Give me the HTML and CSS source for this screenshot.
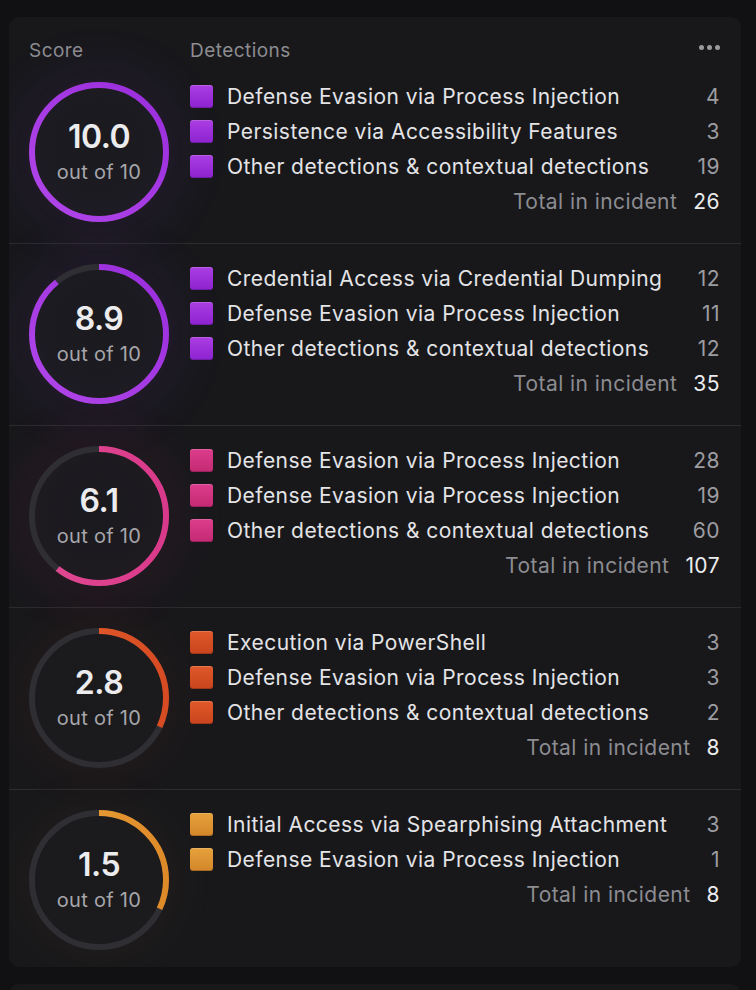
FILE: index.html
```html
<!DOCTYPE html>
<html lang="en">
<head>
<meta charset="utf-8">
<title>Incident scores</title>
<link rel="stylesheet" href="styles.css">
</head>
<body>
<svg class="defs" width="0" height="0" aria-hidden="true">
  <defs>
    <linearGradient id="g-purple" x1="0" y1="0" x2="1" y2="1">
      <stop offset="0" stop-color="#b146ea"/>
      <stop offset="1" stop-color="#9a2ddc"/>
    </linearGradient>
    <linearGradient id="g-pink" x1="0" y1="0" x2="0" y2="1">
      <stop offset="0" stop-color="#e24a92"/>
      <stop offset="1" stop-color="#d9398a"/>
    </linearGradient>
    <linearGradient id="g-red" x1="0" y1="0" x2="0" y2="1">
      <stop offset="0" stop-color="#e5602f"/>
      <stop offset="1" stop-color="#d74b22"/>
    </linearGradient>
    <linearGradient id="g-orange" x1="0" y1="0" x2="0" y2="1">
      <stop offset="0" stop-color="#eca63c"/>
      <stop offset="1" stop-color="#de8a28"/>
    </linearGradient>
  </defs>
</svg>
<div class="card">
  <div class="head">
    <span class="h-score">Score</span>
    <span class="h-det">Detections</span>
    <span class="dots"><i></i><i></i><i></i></span>
  </div>

  <section class="row purple">
    <div class="gauge">
      <svg viewBox="0 0 140 140" class="ring">
        <circle class="track" cx="70" cy="70" r="67"/>
        <circle class="arc" cx="70" cy="70" r="67" stroke="url(#g-purple)" style="stroke-dasharray: 420.97 420.97"/>
      </svg>
      <div class="score"><b>10.0</b><span>out of 10</span></div>
    </div>
    <ul class="dets">
      <li><span class="sq"></span><span class="lbl">Defense Evasion via Process Injection</span><span class="cnt">4</span></li>
      <li><span class="sq"></span><span class="lbl">Persistence via Accessibility Features</span><span class="cnt">3</span></li>
      <li><span class="sq"></span><span class="lbl">Other detections &amp; contextual detections</span><span class="cnt">19</span></li>
      <li class="total"><span class="tl">Total in incident</span><span class="tn">26</span></li>
    </ul>
  </section>

  <section class="row purple">
    <div class="gauge">
      <svg viewBox="0 0 140 140" class="ring">
        <circle class="track" cx="70" cy="70" r="67"/>
        <circle class="arc" cx="70" cy="70" r="67" stroke="url(#g-purple)" style="stroke-dasharray: 374.66 420.97"/>
      </svg>
      <div class="score"><b>8.9</b><span>out of 10</span></div>
    </div>
    <ul class="dets">
      <li><span class="sq"></span><span class="lbl">Credential Access via Credential Dumping</span><span class="cnt">12</span></li>
      <li><span class="sq"></span><span class="lbl">Defense Evasion via Process Injection</span><span class="cnt">11</span></li>
      <li><span class="sq"></span><span class="lbl">Other detections &amp; contextual detections</span><span class="cnt">12</span></li>
      <li class="total"><span class="tl">Total in incident</span><span class="tn">35</span></li>
    </ul>
  </section>

  <section class="row pink">
    <div class="gauge">
      <svg viewBox="0 0 140 140" class="ring">
        <circle class="track" cx="70" cy="70" r="67"/>
        <circle class="arc" cx="70" cy="70" r="67" stroke="url(#g-pink)" style="stroke-dasharray: 254.79 420.97"/>
      </svg>
      <div class="score"><b>6.1</b><span>out of 10</span></div>
    </div>
    <ul class="dets">
      <li><span class="sq"></span><span class="lbl">Defense Evasion via Process Injection</span><span class="cnt">28</span></li>
      <li><span class="sq"></span><span class="lbl">Defense Evasion via Process Injection</span><span class="cnt">19</span></li>
      <li><span class="sq"></span><span class="lbl">Other detections &amp; contextual detections</span><span class="cnt">60</span></li>
      <li class="total"><span class="tl">Total in incident</span><span class="tn">107</span></li>
    </ul>
  </section>

  <section class="row red">
    <div class="gauge">
      <svg viewBox="0 0 140 140" class="ring">
        <circle class="track" cx="70" cy="70" r="67"/>
        <circle class="arc" cx="70" cy="70" r="67" stroke="url(#g-red)" style="stroke-dasharray: 134.7 420.97"/>
      </svg>
      <div class="score"><b>2.8</b><span>out of 10</span></div>
    </div>
    <ul class="dets">
      <li><span class="sq"></span><span class="lbl">Execution via PowerShell</span><span class="cnt">3</span></li>
      <li><span class="sq"></span><span class="lbl">Defense Evasion via Process Injection</span><span class="cnt">3</span></li>
      <li><span class="sq"></span><span class="lbl">Other detections &amp; contextual detections</span><span class="cnt">2</span></li>
      <li class="total"><span class="tl">Total in incident</span><span class="tn">8</span></li>
    </ul>
  </section>

  <section class="row orange last">
    <div class="gauge">
      <svg viewBox="0 0 140 140" class="ring">
        <circle class="track" cx="70" cy="70" r="67"/>
        <circle class="arc" cx="70" cy="70" r="67" stroke="url(#g-orange)" style="stroke-dasharray: 134.7 420.97"/>
      </svg>
      <div class="score"><b>1.5</b><span>out of 10</span></div>
    </div>
    <ul class="dets">
      <li><span class="sq"></span><span class="lbl">Initial Access via Spearphising Attachment</span><span class="cnt">3</span></li>
      <li><span class="sq"></span><span class="lbl">Defense Evasion via Process Injection</span><span class="cnt">1</span></li>
      <li class="total"><span class="tl">Total in incident</span><span class="tn">8</span></li>
    </ul>
  </section>
</div>
<div class="card next"></div>
</body>
</html>
```

FILE: styles.css
```css
html, body {
  margin: 0;
  padding: 0;
  background: #111113;
}
body {
  padding: 17px 15px 0 9px;
  font-family: Inter, "Noto Sans", "Liberation Sans", sans-serif;
  color: #e4e4e7;
  overflow: hidden;
  height: 990px;
  box-sizing: border-box;
}
.defs {
  position: absolute;
  width: 0;
  height: 0;
}
.card {
  background: #18181b;
  border-radius: 10px;
  overflow: hidden;
}
.card.next {
  margin-top: 17px;
  height: 40px;
}
.head {
  display: flex;
  align-items: center;
  height: 24px;
  padding: 21px 21px 0 20px;
  font-size: 19px;
  letter-spacing: 0.45px;
  color: #8c8c91;
}
.h-score {
  width: 161px;
}
.h-det {
  flex: 1;
}
.dots {
  display: flex;
  gap: 3px;
  margin-top: -6px;
}
.dots i {
  width: 5px;
  height: 5px;
  border-radius: 50%;
  background: #9a9a9e;
}
.row {
  display: grid;
  grid-template-columns: 140px 1fr;
  column-gap: 21px;
  padding: 20px 21px 21px 20px;
  border-top: 1px solid #2b2b30;
}
.row:first-of-type {
  border-top: none;
}
.row.last {
  padding-bottom: 17px;
}
.gauge {
  width: 140px;
  height: 140px;
  border-radius: 50%;
  display: grid;
  place-items: center;
  background: radial-gradient(circle at 50% 45%, #1a1a1e 0%, #1d1b22 55%, #201c27 100%);
}
.purple .gauge { box-shadow: 0 0 55px 10px rgba(140, 60, 210, 0.11); }
.pink .gauge { box-shadow: 0 0 55px 10px rgba(215, 50, 130, 0.09); background: radial-gradient(circle at 50% 45%, #1a1a1e 0%, #1d1a20 55%, #211b22 100%); }
.red .gauge { box-shadow: 0 0 50px 8px rgba(215, 80, 40, 0.06); background: radial-gradient(circle at 50% 45%, #1a1a1c 0%, #1c1a1d 100%); }
.orange .gauge { box-shadow: 0 0 50px 8px rgba(225, 130, 40, 0.05); background: radial-gradient(circle at 50% 45%, #1a1a1c 0%, #1c1a1d 100%); }
.ring {
  grid-area: 1 / 1;
  width: 140px;
  height: 140px;
  transform: rotate(-90deg);
}
.ring circle {
  fill: none;
  stroke-width: 6;
}
.ring .track {
  stroke: #2e2e33;
}
.score {
  grid-area: 1 / 1;
  display: flex;
  flex-direction: column;
  align-items: center;
  margin-top: 4px;
}
.score b {
  font-size: 32px;
  font-weight: 600;
  line-height: 36px;
  color: #ececee;
  letter-spacing: -0.5px;
}
.score span {
  font-size: 20px;
  line-height: 34px;
  letter-spacing: 0.3px;
  color: #a6a6ab;
}
.dets {
  list-style: none;
  margin: -3px 0 0;
  padding: 0;
}
.dets li {
  display: flex;
  align-items: center;
  height: 35px;
  font-size: 21px;
  letter-spacing: 0.45px;
}
.sq {
  width: 23px;
  height: 23px;
  border-radius: 3px;
  margin-right: 14px;
  flex: none;
  box-shadow: inset 0 1px 0 rgba(255, 255, 255, 0.18), inset 0 -1px 0 rgba(0, 0, 0, 0.2);
}
.purple .sq { background: linear-gradient(#ab3ee2, #8d22d0); }
.pink .sq { background: linear-gradient(#dc3d8c, #c42a74); }
.red .sq { background: linear-gradient(#e0592b, #c9441d); }
.orange .sq { background: linear-gradient(#e6a23c, #d3862a); }
.lbl {
  flex: 1;
  color: #e4e4e7;
  white-space: nowrap;
}
.cnt {
  color: #9c9ca1;
}
.dets li.total {
  justify-content: flex-end;
}
.tl {
  color: #8c8c91;
  margin-right: 16px;
}
.tn {
  color: #ececee;
}
```
